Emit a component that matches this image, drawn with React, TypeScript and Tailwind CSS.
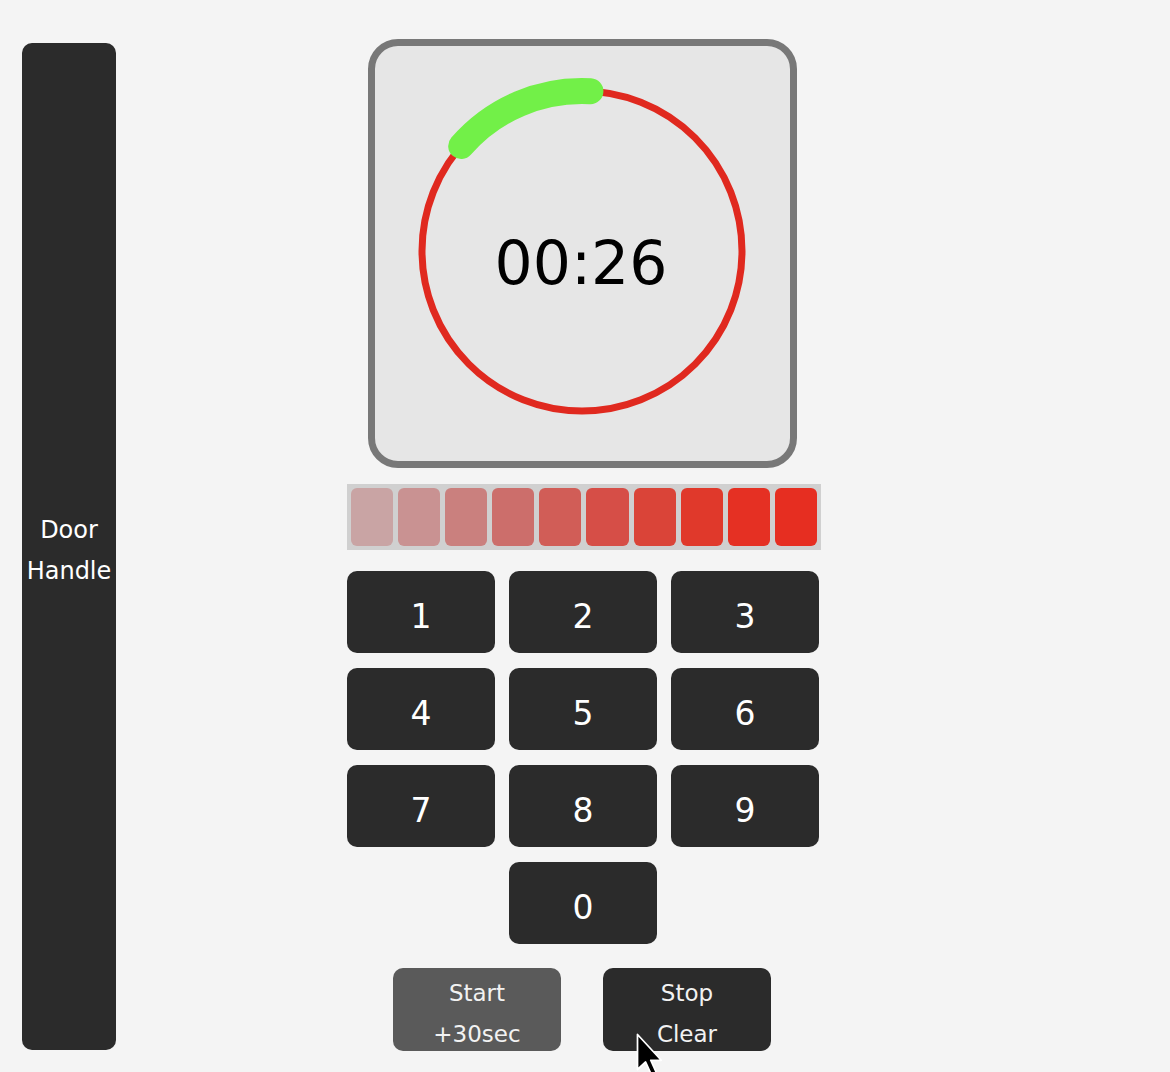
import React from "react";

const ledColors = [
  "bg-[#c9a4a4]",
  "bg-[#c99292]",
  "bg-[#ca807e]",
  "bg-[#cc6e6b]",
  "bg-[#d15d57]",
  "bg-[#d64e47]",
  "bg-[#da4438]",
  "bg-[#e0392b]",
  "bg-[#e53023]",
  "bg-[#e62e21]",
];

const keys = ["1", "2", "3", "4", "5", "6", "7", "8", "9"];

function Key({ label, className = "" }: { label: string; className?: string }) {
  return (
    <button className={`h-[82px] w-[148px] rounded-[10px] bg-[#2b2b2b] pt-[10px] text-[33px] text-white ${className}`}>
      {label}
    </button>
  );
}

export default function App() {
  return (
    <main
      className="relative flex min-h-[1072px] w-full overflow-hidden bg-[#f4f4f4] pl-[22px] pt-[39px]"
      style={{ fontFamily: '"DejaVu Sans", "Liberation Sans", sans-serif' }}
    >
      {/* Door handle */}
      <div className="mt-[4px] flex h-[1007px] w-[94px] flex-col items-center justify-center rounded-[10px] bg-[#2b2b2b] pt-[8px] text-[24px] leading-[41px] text-white">
        <span>Door</span>
        <span>Handle</span>
      </div>

      {/* Microwave panel */}
      <div className="ml-[231px] flex w-[474px] flex-col items-center">
        {/* Display */}
        <div className="relative -ml-[4px] h-[429px] w-[429px] rounded-[30px] border-[7px] border-[#787878] bg-[#e6e6e6]">
          <svg className="absolute -left-[7px] -top-[7px]" width="429" height="429" viewBox="0 0 429 429">
            <circle cx="214" cy="212" r="160" fill="none" stroke="#e0291f" strokeWidth="7" />
            <path
              d="M 93.2 107 A 160 160 0 0 1 222.4 52.2"
              fill="none"
              stroke="#72f048"
              strokeWidth="26"
              strokeLinecap="round"
            />
          </svg>
          <div className="absolute inset-0 flex items-center justify-center pt-[18px] pr-[2px] text-[60px] text-black">
            00:26
          </div>
        </div>

        {/* Power level bar */}
        <div className="mt-[16px] flex h-[66px] w-[474px] gap-[5px] self-start bg-[#d0d0d0] p-[4px]">
          {ledColors.map((c, i) => (
            <div key={i} className={`flex-1 rounded-[6px] ${c}`} />
          ))}
        </div>

        {/* Keypad */}
        <div className="mt-[21px] grid grid-cols-3 gap-x-[14px] gap-y-[15px] self-start">
          {keys.map((k) => (
            <Key key={k} label={k} />
          ))}
          <Key label="0" className="col-start-2" />
        </div>

        {/* Controls */}
        <div className="mt-[24px] flex gap-[42px] pr-[4px]">
          <button className="flex h-[83px] w-[168px] flex-col items-center justify-center rounded-[10px] bg-[#5a5a5a] pt-[8px] text-[23px] leading-[41px] text-[#f2f2f2]">
            <span>Start</span>
            <span>+30sec</span>
          </button>
          <button className="flex h-[83px] w-[168px] flex-col items-center justify-center rounded-[10px] bg-[#2b2b2b] pt-[8px] text-[23px] leading-[41px] text-[#f2f2f2]">
            <span>Stop</span>
            <span>Clear</span>
          </button>
        </div>
      </div>

      {/* Mouse cursor */}
      <svg className="absolute left-[634px] top-[1032px]" width="32" height="50" viewBox="0 0 24 40">
        <path d="M2 2 L2 30 L8.5 24 L13 34 L17 32.3 L12.6 22.6 L21 22.6 Z" fill="#000" stroke="#fff" strokeWidth="1.4" strokeLinejoin="round" />
      </svg>
    </main>
  );
}
